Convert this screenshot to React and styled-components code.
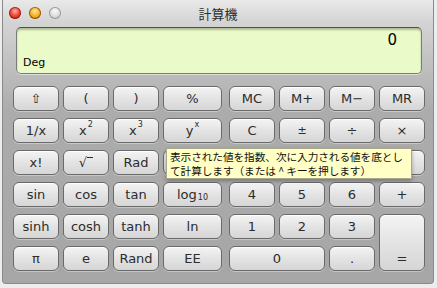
import React from 'react';
import styled, { createGlobalStyle } from 'styled-components';

const GlobalStyle = createGlobalStyle`
  html, body {
    margin: 0;
    padding: 0;
    background: #ededed;
  }
  body {
    font-family: "DejaVu Sans", "Liberation Sans", sans-serif;
  }
`;

const sciKeys = [
  [{ label: '⇧' }, { label: '(' }, { label: ')' }, { label: '%' }],
  [
    { label: <>1/x</> },
    { label: <>x<Sup>2</Sup></> },
    { label: <>x<Sup>3</Sup></> },
    { label: <>y<Sup>x</Sup></> },
  ],
  [
    { label: 'x!' },
    { label: <Root>√<RootBar /></Root> },
    { label: 'Rad' },
    { label: <>e<Sup>x</Sup></> },
  ],
  [{ label: 'sin' }, { label: 'cos' }, { label: 'tan' }, { label: <>log<Sub>10</Sub></> }],
  [{ label: 'sinh' }, { label: 'cosh' }, { label: 'tanh' }, { label: 'ln' }],
  [{ label: 'π' }, { label: 'e' }, { label: 'Rand' }, { label: 'EE' }],
];

function Sup({ children }) {
  return <SupText>{children}</SupText>;
}
function Sub({ children }) {
  return <SubText>{children}</SubText>;
}
function Root({ children }) {
  return <RootWrap>{children}</RootWrap>;
}
function RootBar() {
  return <RootLine />;
}

function App() {
  return (
    <>
      <GlobalStyle />
      <Window>
        <TitleBar>
          <Lights>
            <Light $color="red" />
            <Light $color="yellow" />
            <Light $color="gray" />
          </Lights>
          <Title>計算機</Title>
        </TitleBar>
        <Body>
          <Display>
            <Value>0</Value>
            <Mode>Deg</Mode>
          </Display>
          <Keypad>
            <SciGrid>
              {sciKeys.flat().map((k, i) => (
                <Key key={i}>{k.label}</Key>
              ))}
            </SciGrid>
            <BasicGrid>
              <Key>MC</Key>
              <Key>M+</Key>
              <Key>M−</Key>
              <Key>MR</Key>
              <Key>C</Key>
              <Key $small>±</Key>
              <Key>÷</Key>
              <Key>×</Key>
              <Key>7</Key>
              <Key>8</Key>
              <Key>9</Key>
              <Key>−</Key>
              <Key>4</Key>
              <Key>5</Key>
              <Key>6</Key>
              <Key>+</Key>
              <Key>1</Key>
              <Key>2</Key>
              <Key>3</Key>
              <Key $tall $bottom>=</Key>
              <Key $wide>0</Key>
              <Key $bottom>.</Key>
            </BasicGrid>
          </Keypad>
        </Body>
        <Tooltip>
          <TipLine>表示された値を指数、次に入力される値を底とし</TipLine>
          <TipLine>て計算します（または ^ キーを押します）</TipLine>
        </Tooltip>
      </Window>
    </>
  );
}

export default App;

const Window = styled.div`
  position: relative;
  width: 430px;
  height: 283px;
  margin-left: 2px;
  border: 1px solid #8a8a8a;
  border-top: none;
  border-radius: 0 0 4px 4px;
  background: linear-gradient(#e9e9e9 0px, #d4d4d4 22px, #c2c2c2 60px, #acacac 110px, #a6a6a6 100%);
  box-sizing: content-box;
  overflow: hidden;
`;

const TitleBar = styled.div`
  height: 22px;
  display: flex;
  align-items: center;
  justify-content: center;
  position: relative;
`;

const Lights = styled.div`
  position: absolute;
  left: 6px;
  top: 7px;
  display: flex;
  gap: 8px;
`;

const lightColors = {
  red: 'radial-gradient(circle at 50% 35%, #ffb0a8 0%, #f2463a 45%, #b80d06 100%)',
  yellow: 'radial-gradient(circle at 50% 35%, #ffe6a0 0%, #f7b52a 45%, #c27a00 100%)',
  gray: 'radial-gradient(circle at 50% 35%, #fafafa 0%, #dcdcdc 50%, #b8b8b8 100%)',
};

const Light = styled.span`
  width: 12px;
  height: 12px;
  border-radius: 50%;
  background: ${p => lightColors[p.$color]};
  box-shadow: inset 0 0 0 1px ${p => (p.$color === 'gray' ? '#9a9a9a' : 'rgba(80,20,0,0.55)')};
`;

const Title = styled.div`
  margin-top: 4px;
  font-family: "Noto Sans CJK JP", sans-serif;
  font-size: 13px;
  color: #2e2e2e;
`;

const Body = styled.div`
  padding: 5px 8px 0 10px;
`;

const Display = styled.div`
  height: 47px;
  margin: 0 3px 12px 3px;
  border: 1px solid #7c7c7c;
  border-top-color: #4e4e4e;
  border-radius: 5px;
  background: #eafac8;
  box-shadow: inset 0 2px 2px rgba(0, 0, 0, 0.25), 0 1px 0 rgba(255, 255, 255, 0.5);
  display: flex;
  flex-direction: column;
  justify-content: space-between;
  padding: 3px 24px 4px 6px;
  box-sizing: border-box;
`;

const Value = styled.div`
  text-align: right;
  font-family: "DejaVu Sans", sans-serif;
  font-size: 15px;
  color: #000;
`;

const Mode = styled.div`
  font-family: "DejaVu Sans", sans-serif;
  font-size: 11px;
  color: #000;
`;

const Keypad = styled.div`
  display: flex;
  gap: 7px;
`;

const SciGrid = styled.div`
  display: grid;
  grid-template-columns: 46px 46px 46px 59px;
  grid-auto-rows: 25px;
  column-gap: 4px;
  row-gap: 7px;
`;

const BasicGrid = styled.div`
  display: grid;
  grid-template-columns: repeat(4, 46px);
  grid-auto-rows: 25px;
  column-gap: 4px;
  row-gap: 7px;
`;

const Key = styled.div`
  grid-column: ${p => (p.$wide ? 'span 2' : 'auto')};
  grid-row: ${p => (p.$tall ? 'span 2' : 'auto')};
  display: flex;
  align-items: ${p => (p.$bottom ? 'flex-end' : 'center')};
  justify-content: center;
  padding-bottom: ${p => (p.$bottom ? '5px' : '0')};
  box-sizing: border-box;
  border: 1px solid #6a6a6a;
  border-radius: 6px;
  background: linear-gradient(#f4f4f4, #e2e2e2 55%, #d6d6d6);
  box-shadow: inset 0 1px 0 #ffffff, 0 1px 0 rgba(255, 255, 255, 0.35);
  font-family: "DejaVu Sans", sans-serif;
  font-size: ${p => (p.$small ? '11px' : '13px')};
  color: #2c2c2c;
  line-height: 1;
`;

const SupText = styled.span`
  font-size: 8px;
  position: relative;
  top: -6px;
  margin-left: 1px;
`;

const SubText = styled.span`
  font-size: 8px;
  position: relative;
  top: 3px;
  margin-left: 1px;
`;

const RootWrap = styled.span`
  display: inline-flex;
  align-items: flex-start;
`;

const RootLine = styled.span`
  width: 6px;
  height: 0;
  border-top: 1px solid #2c2c2c;
  margin-top: 1px;
`;

const Tooltip = styled.div`
  position: absolute;
  left: 163px;
  top: 148px;
  width: 246px;
  height: 31px;
  box-sizing: border-box;
  padding: 1px 2px 0 3px;
  background: #ffffc6;
  border: 1px solid #a8a88c;
  box-shadow: 0 2px 4px rgba(0, 0, 0, 0.3);
  font-family: "Noto Sans CJK JP", sans-serif;
  font-size: 10.7px;
  color: #111;
  white-space: nowrap;
`;

const TipLine = styled.div`
  height: 14px;
  line-height: 14px;
  letter-spacing: -0.1px;
`;
